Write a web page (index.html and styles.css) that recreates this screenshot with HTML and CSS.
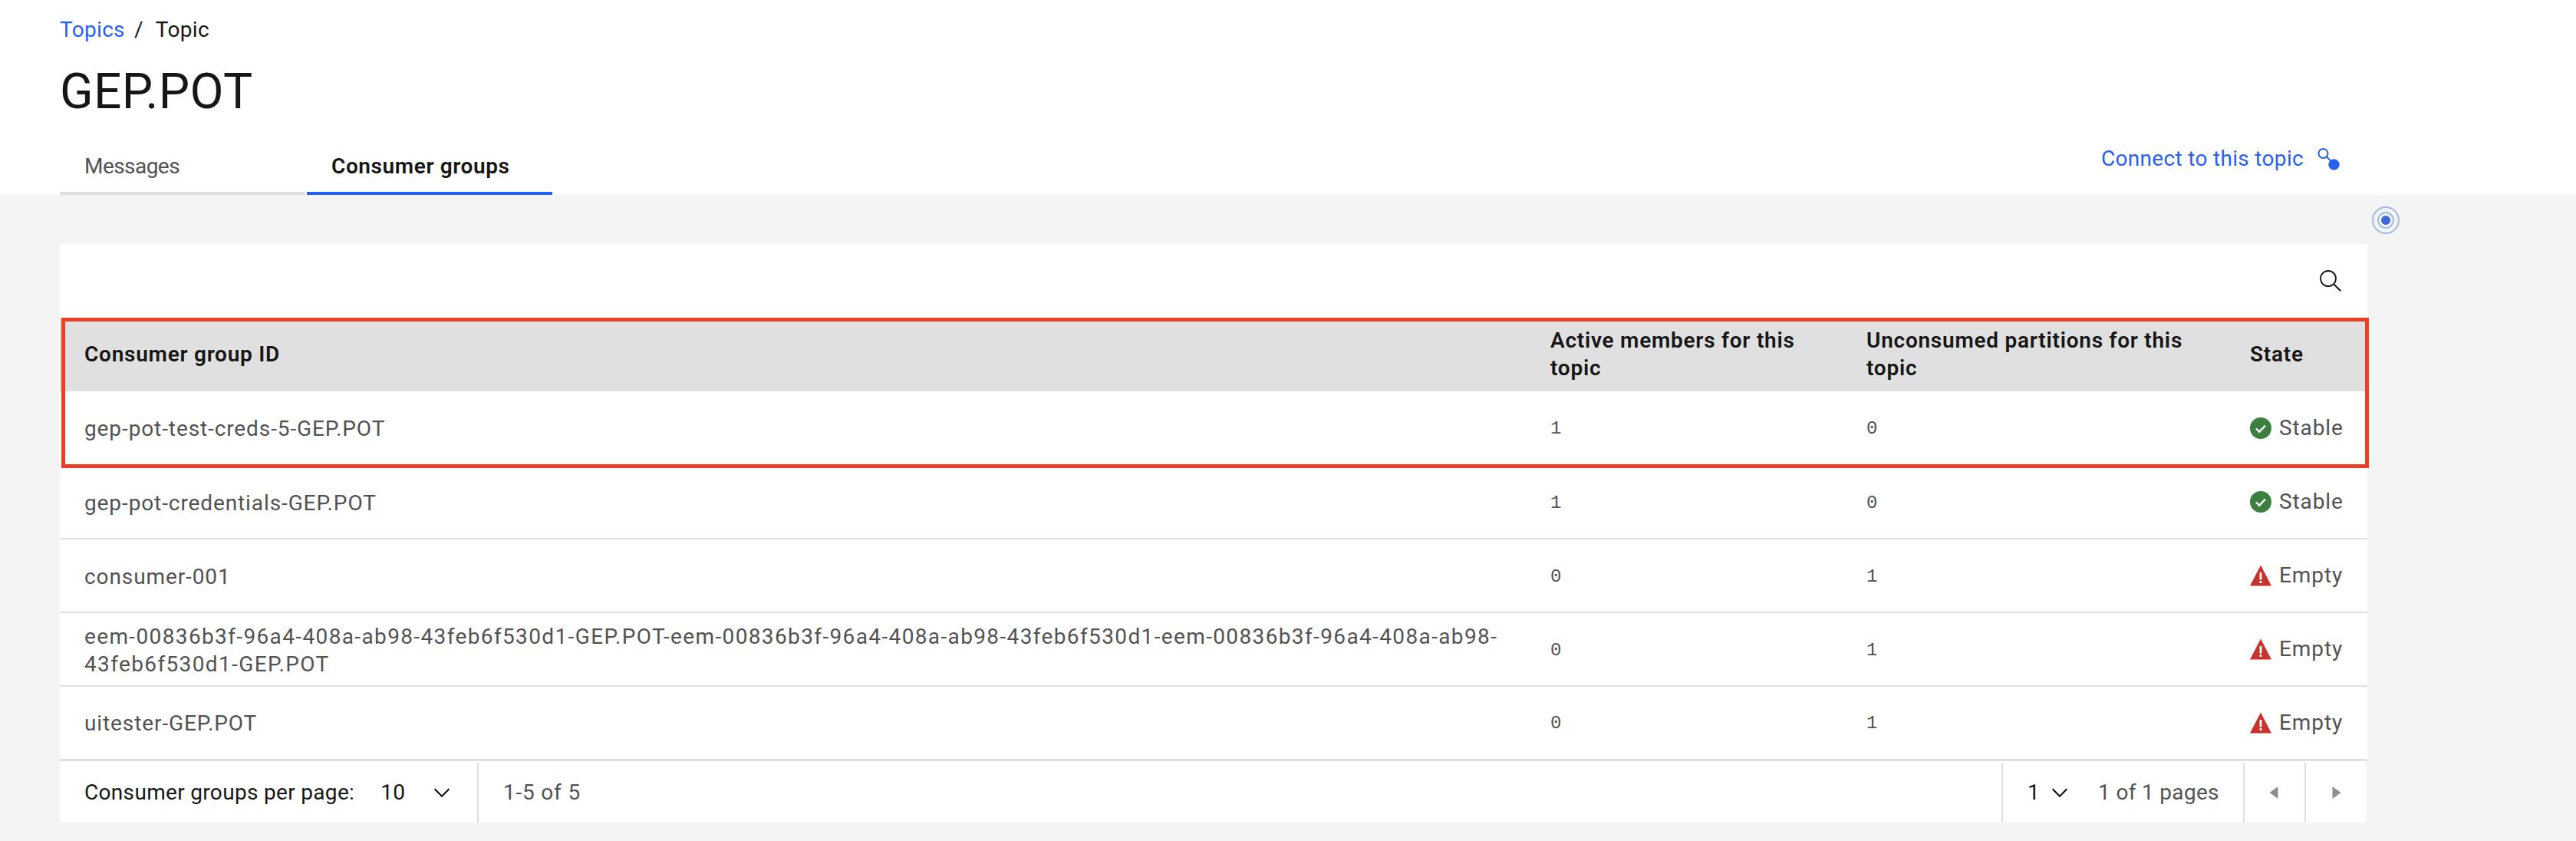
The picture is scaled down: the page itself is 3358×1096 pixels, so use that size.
FILE: index.html
```html
<!DOCTYPE html>
<html lang="en">
<head>
  <meta charset="UTF-8" />
  <meta name="viewport" content="width=device-width, initial-scale=1" />
  <title>GEP.POT</title>
  <link rel="stylesheet" href="styles.css">
</head>
<body>

  <svg class="defs" width="0" height="0">
    <symbol id="icon-ok" viewBox="0 0 28 28">
      <circle cx="14" cy="14" r="14" fill="#3c7f41" />
      <path d="M8 14.5l4.2 4.2L20 10.5" fill="none" stroke="#fff" stroke-width="2.4" />
    </symbol>
    <symbol id="icon-warn" viewBox="0 0 28 28">
      <path d="M14 0.5L28 27.5H0z" fill="#c8322f" />
      <rect x="12.6" y="10" width="2.8" height="9.5" fill="#fff" />
      <rect x="12.6" y="21" width="2.8" height="3" fill="#fff" />
    </symbol>
    <symbol id="icon-chevron" viewBox="0 0 32 32">
      <path d="M16 22L6 12l1.4-1.4L16 19.2l8.6-8.6L26 12z" />
    </symbol>
  </svg>

  <header class="page-header">
    <nav class="breadcrumb">
      <a class="link" href="#">Topics</a>
      <span class="breadcrumb-sep">/</span>
      <span>Topic</span>
    </nav>
    <h1 class="title">GEP.POT</h1>
    <div class="tab-row">
      <div class="tabs">
        <div class="tab">Messages</div>
        <div class="tab tab-active">Consumer groups</div>
      </div>
      <a class="link connect" href="#">
        Connect to this topic
        <svg width="32" height="32" viewBox="0 0 32 32">
          <circle cx="9.5" cy="9" r="6" fill="none" stroke="currentColor" stroke-width="2" />
          <path d="M14 13.5l6 6" stroke="currentColor" stroke-width="2" />
          <circle cx="23.5" cy="23.5" r="7.2" fill="currentColor" />
        </svg>
      </a>
    </div>
  </header>

  <main class="content">
    <div class="beacon"><span class="beacon-mid"><span class="beacon-dot"></span></span></div>

    <section class="card">
      <div class="toolbar">
        <svg width="32" height="32" viewBox="0 0 16 16" fill="#161616">
          <path d="M15 14.3L10.7 10c1.9-2.3 1.6-5.8-.7-7.7S4.2.7 2.3 3 .7 8.8 3 10.7c2 1.7 5 1.7 7 0l4.3 4.3.7-.7zM2 6.5C2 4 4 2 6.5 2S11 4 11 6.5 9 11 6.5 11 2 9 2 6.5z" />
        </svg>
      </div>

      <table class="groups">
        <colgroup>
          <col class="col-id" />
          <col class="col-members" />
          <col class="col-partitions" />
          <col class="col-state" />
        </colgroup>
        <thead>
          <tr>
            <th>Consumer group ID</th>
            <th>Active members for this topic</th>
            <th>Unconsumed partitions for this topic</th>
            <th>State</th>
          </tr>
        </thead>
        <tbody>
          <tr>
            <td>gep-pot-test-creds-5-GEP.POT</td>
            <td class="num">1</td>
            <td class="num">0</td>
            <td><span class="state"><svg width="28" height="28"><use href="#icon-ok" /></svg>Stable</span></td>
          </tr>
          <tr>
            <td>gep-pot-credentials-GEP.POT</td>
            <td class="num">1</td>
            <td class="num">0</td>
            <td><span class="state"><svg width="28" height="28"><use href="#icon-ok" /></svg>Stable</span></td>
          </tr>
          <tr>
            <td>consumer-001</td>
            <td class="num">0</td>
            <td class="num">1</td>
            <td><span class="state"><svg width="28" height="28"><use href="#icon-warn" /></svg>Empty</span></td>
          </tr>
          <tr>
            <td class="cell-long">eem-00836b3f-96a4-408a-ab98-43feb6f530d1-GEP.POT-eem-00836b3f-96a4-408a-ab98-43feb6f530d1-eem-00836b3f-96a4-408a-ab98-<br>43feb6f530d1-GEP.POT</td>
            <td class="num">0</td>
            <td class="num">1</td>
            <td><span class="state"><svg width="28" height="28"><use href="#icon-warn" /></svg>Empty</span></td>
          </tr>
          <tr>
            <td>uitester-GEP.POT</td>
            <td class="num">0</td>
            <td class="num">1</td>
            <td><span class="state"><svg width="28" height="28"><use href="#icon-warn" /></svg>Empty</span></td>
          </tr>
        </tbody>
      </table>

      <div class="pagination">
        <div class="page-size">
          <span>Consumer groups per page:</span>
          <span class="page-size-value">10</span>
          <svg class="chevron" width="32" height="32"><use href="#icon-chevron" /></svg>
        </div>
        <div class="page-range">1-5 of 5</div>
        <div class="page-picker">
          <span class="page-current">1</span>
          <svg class="chevron" width="32" height="32"><use href="#icon-chevron" /></svg>
          <span class="page-total">1 of 1 pages</span>
        </div>
        <div class="page-btn">
          <svg width="32" height="32" viewBox="0 0 32 32"><path d="M20.5 8v16L9.5 16z" /></svg>
        </div>
        <div class="page-btn">
          <svg width="32" height="32" viewBox="0 0 32 32"><path d="M11.5 8v16l11-8z" /></svg>
        </div>
      </div>

      <div class="highlight"></div>
    </section>
  </main>

</body>
</html>
```

FILE: styles.css
```css
:root {
  --primary: #2860f0;
  --text: #161616;
  --muted: #525252;
  --background: #f4f4f4;
  --line: #e0e0e0;
  --marker: #ea4025;
}

* {
  box-sizing: border-box;
}

html, body {
  height: 100%;
}

body {
  margin: 0;
  font-family: Roboto, "Liberation Sans", sans-serif;
  font-size: 28px;
  line-height: 36px;
  letter-spacing: 0.32px;
  background: var(--background);
  color: var(--text);
  overflow: hidden;
}

.defs {
  position: absolute;
}

.link {
  color: var(--primary);
  text-decoration: none;
}

.page-header {
  background: #fff;
  height: 254px;
  padding: 21px 307px 0 78px;
}

.breadcrumb {
  display: flex;
}

.breadcrumb-sep {
  margin: 0 16px 0 12px;
}

.title {
  font-size: 64px;
  font-weight: 400;
  line-height: 80px;
  letter-spacing: 0.4px;
  margin: 23px 0 15px;
}

.tab-row {
  display: flex;
  justify-content: space-between;
  align-items: flex-start;
}

.tabs {
  display: flex;
  gap: 2px;
}

.tab {
  width: 320px;
  padding: 24px 32px 15px;
  border-bottom: 4px solid var(--line);
  color: var(--muted);
  letter-spacing: -0.55px;
}

.tab-active {
  color: var(--text);
  font-weight: 600;
  letter-spacing: 0.6px;
  border-bottom-color: var(--primary);
}

.connect {
  display: flex;
  align-items: center;
  gap: 16px;
  margin-top: 14px;
}

.content {
  position: relative;
  padding: 64px 0 23px 78px;
}

.beacon {
  position: absolute;
  left: 3092px;
  top: 15px;
  width: 36px;
  height: 36px;
  border: 2px solid #a3bbe9;
  border-radius: 50%;
  display: flex;
  align-items: center;
  justify-content: center;
}

.beacon-mid {
  width: 22px;
  height: 22px;
  border: 2px solid #a3bbe9;
  border-radius: 50%;
  display: flex;
  align-items: center;
  justify-content: center;
}

.beacon-dot {
  width: 12px;
  height: 12px;
  flex: none;
  border-radius: 50%;
  background: #3c6bd6;
}

.card {
  position: relative;
  width: 3008px;
}

.toolbar {
  background: #fff;
  height: 96px;
  padding-top: 32px;
  padding-right: 32px;
  display: flex;
  justify-content: flex-end;
}

.groups {
  width: 100%;
  table-layout: fixed;
  border-collapse: collapse;
  background: #fff;
}

.col-id { width: 1911px; }
.col-members { width: 412px; }
.col-partitions { width: 500px; }
.col-state { width: 185px; }

.groups th {
  background: var(--line);
  height: 96px;
  padding: 0 32px;
  text-align: left;
  font-weight: 600;
  letter-spacing: 0.75px;
}

.groups td {
  height: 96px;
  padding: 3px 32px 0;
  color: var(--muted);
  letter-spacing: 0.9px;
  border-bottom: 2px solid var(--line);
}

.groups .cell-long {
  letter-spacing: 1.37px;
}

.groups tr:last-child td {
  border-bottom-width: 3px;
}

.groups .num {
  font-family: "Liberation Mono", monospace;
  font-size: 24px;
  letter-spacing: 0;
}

.state {
  display: flex;
  align-items: center;
  gap: 10px;
  margin: -3px -16px 0 0;
}

.pagination {
  display: flex;
  align-items: center;
  height: 80px;
  margin-right: 2px;
  background: #fff;
  padding-top: 2px;
}

.page-size {
  display: flex;
  align-items: center;
  width: 546px;
  height: 100%;
  padding-left: 32px;
  border-right: 2px solid var(--line);
}

.page-size-value {
  margin-left: 34px;
}

.page-size .chevron {
  margin-left: 32px;
}

.page-range {
  flex: 1;
  padding-left: 32px;
  color: var(--muted);
  letter-spacing: 0.8px;
}

.page-picker {
  display: flex;
  align-items: center;
  width: 315px;
  height: 100%;
  padding-left: 32px;
  border-left: 2px solid var(--line);
}

.page-current {
  margin-right: 10px;
}

.page-total {
  margin-left: 34px;
  color: var(--muted);
}

.page-btn {
  width: 80px;
  height: 100%;
  border-left: 2px solid var(--line);
  display: flex;
  align-items: center;
  justify-content: center;
  fill: #8d8d8d;
}

.highlight {
  position: absolute;
  left: 2px;
  right: -2px;
  top: 96px;
  height: 196px;
  border: 5px solid var(--marker);
}
```
